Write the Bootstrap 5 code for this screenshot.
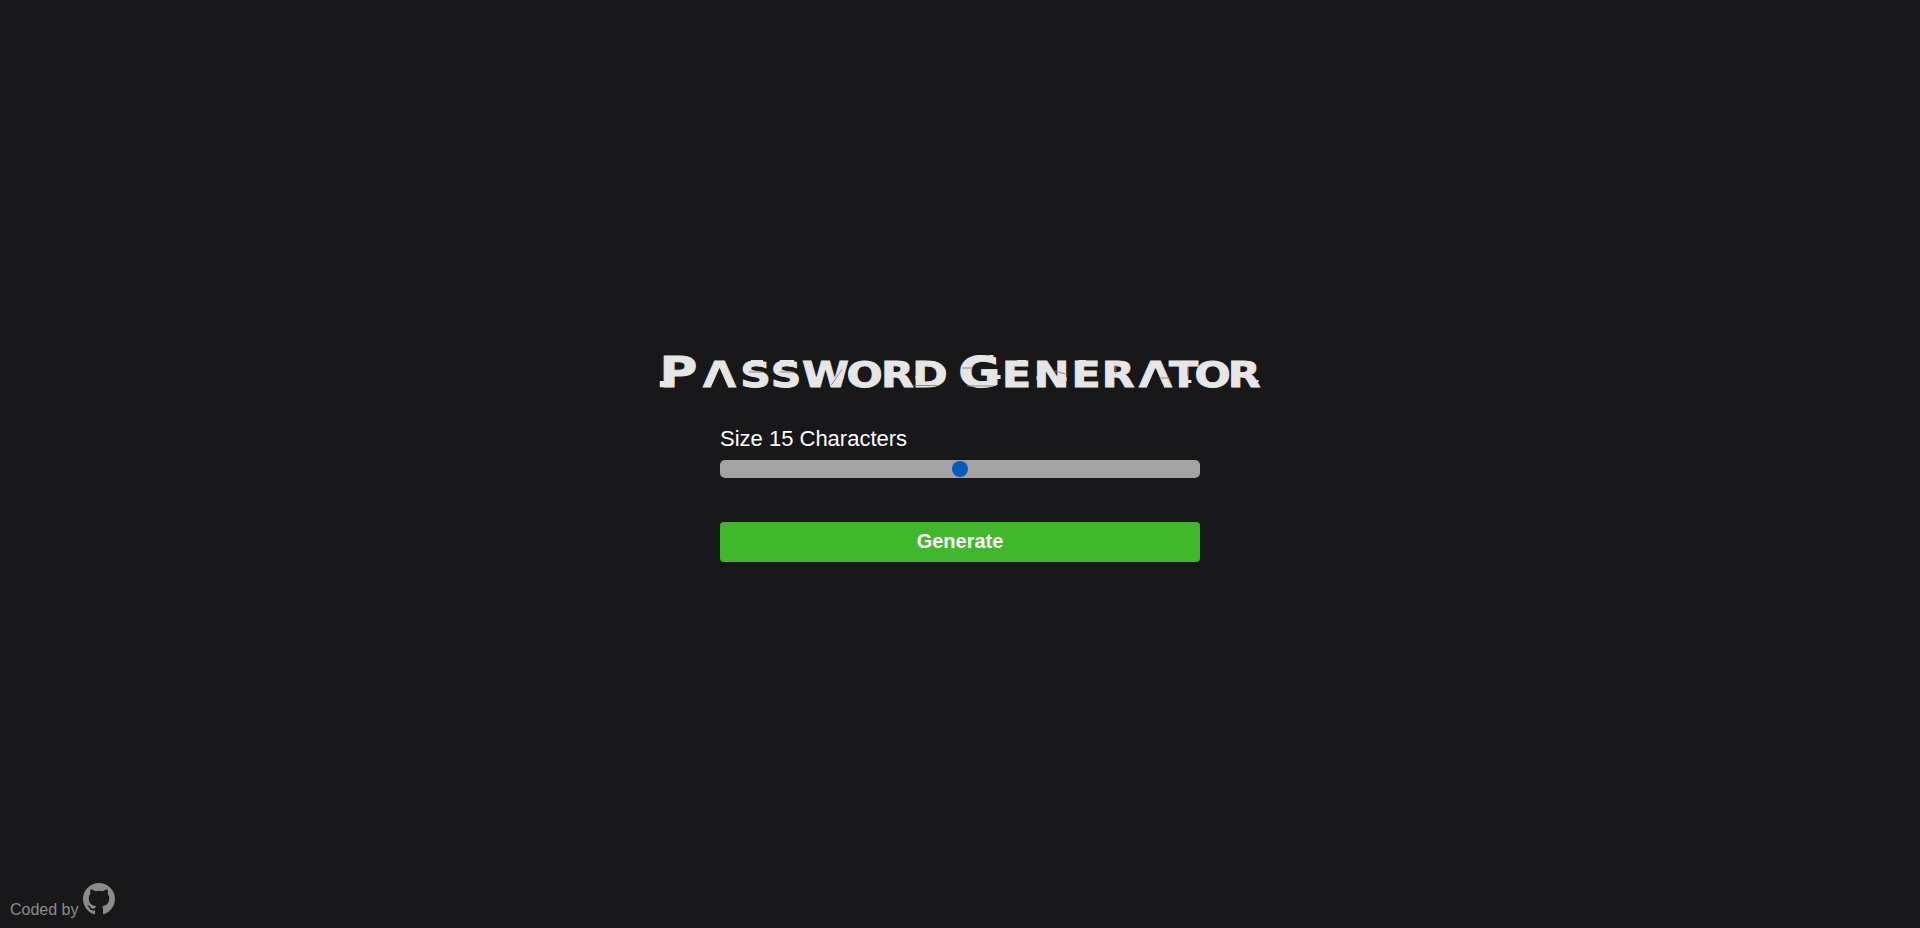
<!DOCTYPE html>
<html lang="en">
<head>
<meta charset="utf-8">
<meta name="viewport" content="width=device-width, initial-scale=1">
<title>Password Generator</title>
<link rel="stylesheet" href="https://cdn.jsdelivr.net/npm/bootstrap@5.3.0/dist/css/bootstrap.min.css">
<style>
body{background:#18181a;color:#fff;font-family:"Liberation Sans",Arial,sans-serif}
main{padding-top:345px}
.title-art{width:610px;height:55px;display:block}
.title-art text{font-family:"DejaVu Sans",sans-serif;font-weight:700;fill:#e6e6e6;stroke:#e6e6e6;stroke-width:.9;text-anchor:middle;text-transform:uppercase}
.initial{font-size:43px}
.rest{font-size:35.5px}
.panel{width:480px;margin-top:22px}
.size-label{font-size:22px;line-height:34px}
.size-range{appearance:none;-webkit-appearance:none;height:18px;border-radius:5px;background:#a3a3a3;margin-top:4px}
.size-range::-webkit-slider-thumb{-webkit-appearance:none;width:16px;height:16px;border:0;border-radius:50%;background:#075bbd}
.btn-generate{height:40px;margin-top:44px;border:0;border-radius:4px;font-size:20px;line-height:36px;padding:0 0 2px;background:#40b72c;color:#fff}
.btn-generate:hover{background:#379e26;color:#fff}
.credit{color:#8b8b8c;padding:0 0 9px 10px;font-size:16px;line-height:18px}
.credit svg{margin:0 0 4px 4px}
</style>
</head>
<body>
<div class="d-flex flex-column vh-100 overflow-hidden">
<main class="d-flex flex-column align-items-center flex-grow-1">
<h1 class="m-0">
<svg class="title-art" viewBox="0 0 508.33 55" preserveAspectRatio="none" role="img" aria-label="Password Generator">
<text y="42"><tspan class="initial" x="19.6">P</tspan><tspan class="rest" x="53.8 83.8 109.2 142.1 174.6 202 229.2">assword</tspan></text>
<text y="42"><tspan class="initial" x="270.4">G</tspan><tspan class="rest" x="301.3 330.4 359.2 386 417.1 440.5 464.6 491">enerator</tspan></text>
<!-- open counters of the A letters -->
<path fill="#18181a" d="M53.8 23l7.4 19.8H46.4zM417.1 23l7.4 19.8h-14.8z"/>
<!-- displaced slices -->
<path fill="#e6e6e6" d="M4 36h4v6.3H4zM47 23h5v2h-5zM80 15h10v2H80zM104 15h12v2h-12zM132 32h6v2h-6zM150 32h7v2h-7zM217 31h4v3h-4zM239 25h3v4h-3zM278 10h4v5h-4zM284 30h4v4h-4zM302 15h7v2h-7zM318 31h4v4h-4zM339 32h4v4h-4zM353 15h6v2h-6zM410 23h5v2h-5zM443 35h4v3h-4zM498 35h5v2h-5z"/>
<path d="M78 27h12M104 27h12M147 40l9-16M216 40.5h19M256 23h9M260 41h22M333 26l9 3M384 20v9M421 33h8M444 22v9" fill="none" stroke="#7d7d7f" stroke-width=".8"/>
</svg>
</h1>
<form class="panel d-flex flex-column">
<label class="size-label" for="size">Size 15 Characters</label>
<input class="size-range w-100" id="size" type="range" min="5" max="25" value="15">
<button class="btn btn-generate w-100 fw-bold" type="button">Generate</button>
</form>
</main>
<footer class="credit d-flex align-items-end">
<span>Coded by</span>
<svg width="32" height="32" viewBox="0 0 16 16" fill="currentColor" aria-hidden="true"><path d="M8 0C3.58 0 0 3.58 0 8c0 3.54 2.29 6.53 5.47 7.59.4.07.55-.17.55-.38 0-.19-.01-.82-.01-1.49-2.01.37-2.53-.49-2.69-.94-.09-.23-.48-.94-.82-1.13-.28-.15-.68-.52-.01-.53.63-.01 1.08.58 1.23.82.72 1.21 1.87.87 2.33.66.07-.52.28-.87.51-1.07-1.78-.2-3.64-.89-3.64-3.95 0-.87.31-1.59.82-2.15-.08-.2-.36-1.02.08-2.12 0 0 .67-.21 2.2.82.64-.18 1.32-.27 2-.27s1.36.09 2 .27c1.53-1.04 2.2-.82 2.2-.82.44 1.1.16 1.92.08 2.12.51.56.82 1.27.82 2.15 0 3.07-1.87 3.75-3.65 3.95.29.25.54.73.54 1.48 0 1.07-.01 1.93-.01 2.2 0 .21.15.46.55.38A8.01 8.01 0 0 0 16 8c0-4.42-3.58-8-8-8z"/></svg>
</footer>
</div>
<script src="https://cdn.jsdelivr.net/npm/bootstrap@5.3.0/dist/js/bootstrap.bundle.min.js"></script>
</body>
</html>
